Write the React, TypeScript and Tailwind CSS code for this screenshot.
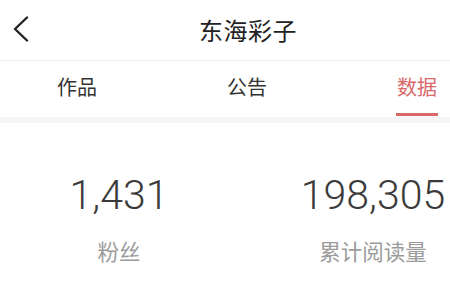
const CJK = "font-['PingFang_SC','Noto_Sans_CJK_SC',sans-serif]";

const TABS = [
  { id: "works", label: "作品" },
  { id: "notice", label: "公告" },
  { id: "data", label: "数据" },
];

const STATS = [
  { value: "1,431", label: "粉丝" },
  { value: "198,305", label: "累计阅读量" },
];

export default function App() {
  const active = "data";

  return (
    <div className={`w-[450px] h-[300px] overflow-hidden bg-white ${CJK}`}>
      {/* header */}
      <div className="relative h-[61px] flex items-center justify-center border-b border-[#ededed]">
        <svg
          className="absolute left-[12px] top-[16px]"
          width="18"
          height="26"
          viewBox="0 0 18 26"
          fill="none"
        >
          <path d="M15 1.5 L3 13 L15 24.5" stroke="#222" strokeWidth="2.4" strokeLinecap="round" strokeLinejoin="round" />
        </svg>
        <div className="ml-[46px] text-[24px] leading-none text-[#222] tracking-[0.5px]">东海彩子</div>
      </div>

      {/* tabs */}
      <div className="flex h-[56px] ml-[-8px]">
        {TABS.map((t) => {
          const on = t.id === active;
          return (
            <div key={t.id} className="w-[170px] shrink-0 flex flex-col items-center">
              <div
                className={`mt-[16px] text-[20px] leading-none ${on ? "text-[#d9686a]" : "text-[#333]"}`}
              >
                {t.label}
              </div>
              {on && <div className="mt-[16px] w-[42px] h-[3px] bg-[#d9686a]" />}
            </div>
          );
        })}
      </div>
      <div className="h-[6px] bg-[#f5f5f7]" />

      {/* stats */}
      <div className="flex pt-[52px]">
        {STATS.map((s, i) => (
          <div
            key={s.label}
            className={`shrink-0 flex flex-col items-center ${i === 0 ? "w-[238px]" : "w-[270px]"}`}
          >
            <div className="font-['Roboto','Liberation_Sans',sans-serif] font-light text-[41px] leading-none text-[#3a3a3a]">
              {s.value}
            </div>
            <div className="mt-[24px] text-[21.5px] leading-none text-[#9b9b9b]">{s.label}</div>
          </div>
        ))}
      </div>
    </div>
  );
}
